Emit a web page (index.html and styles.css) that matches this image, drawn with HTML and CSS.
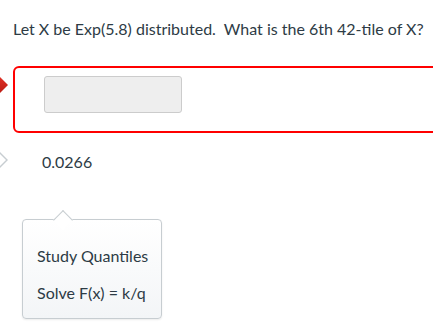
FILE: index.html
```html
<!DOCTYPE html>
<html lang="en">
<head>
    <meta charset="UTF-8">
    <meta name="viewport" content="width=device-width, initial-scale=1.0">
    <title>Quantiles</title>
    <link rel="stylesheet" href="styles.css">
</head>
<body>

    <div class="question">
        <p class="enonce">Let X be Exp(5.8) distributed.&nbsp; What is the 6th 42-tile of X?</p>

        <div class="reponse">
            <span class="fleche fleche-rouge"></span>
            <input class="saisie" type="text">
        </div>

        <div class="correcte">
            <span class="fleche fleche-grise"></span>
            <span class="valeur">0.0266</span>
        </div>

        <div class="bulle">
            <p>Study Quantiles</p>
            <p>Solve F(x) = k/q</p>
        </div>
    </div>

</body>
</html>
```

FILE: styles.css
```css
*{
    padding: 0;
    margin: 0;
    box-sizing: border-box;
}

body{
    background-color: white;
    font-family: Lato, "Open Sans", sans-serif;
    font-size: 16px;
    color: #2d3b45;
    overflow: hidden;
    height: 100vh;
}

.question{
    padding: 19px 0 0 13px;
}

.enonce{
    line-height: 20px;
}

.reponse{
    position: relative;
    margin-top: 27px;
    width: 440px;
    height: 67px;
    border: 2px solid #f00;
    border-radius: 6px;
    padding: 8px 0 0 29px;
}

.saisie{
    display: block;
    width: 138px;
    height: 37px;
    background-color: #eeeeee;
    border: 1px solid #cccccc;
    border-radius: 3px;
    outline: none;
}

/* petites fleches a gauche des lignes */
.fleche{
    position: absolute;
    width: 12px;
    height: 24px;
    clip-path: polygon(0 0, 100% 50%, 0 100%);
}

.fleche-rouge{
    top: 5px;
    left: -19px;
    background: linear-gradient(to bottom, #e8352a, #b3170f);
}

.correcte{
    position: relative;
    height: 28px;
    margin-top: 14px;
    padding-left: 29px;
    display: flex;
    align-items: center;
}

.fleche-grise{
    top: 1px;
    left: -17px;
    background-color: #c7cdd1;
}

.fleche-grise::after{
    content: "";
    position: absolute;
    top: 2px;
    left: 0;
    width: 10px;
    height: 20px;
    background-color: white;
    clip-path: polygon(0 0, 100% 50%, 0 100%);
}

.bulle{
    position: relative;
    margin-top: 44px;
    margin-left: 9px;
    width: 140px;
    height: 100px;
    border: 1px solid #c7cdd1;
    border-radius: 4px;
    background: linear-gradient(to bottom, #ffffff, #f3f5f7);
    box-shadow: 0 1px 2px rgba(0, 0, 0, 0.08);
    padding: 26px 0 0 14px;
}

.bulle::before{
    content: "";
    position: absolute;
    top: -10px;
    left: 33px;
    width: 13px;
    height: 13px;
    background-color: white;
    border-top: 1px solid #c7cdd1;
    border-left: 1px solid #c7cdd1;
    transform: translateY(3px) rotate(45deg);
}

.bulle p{
    line-height: 20px;
    margin-bottom: 17px;
}
```
